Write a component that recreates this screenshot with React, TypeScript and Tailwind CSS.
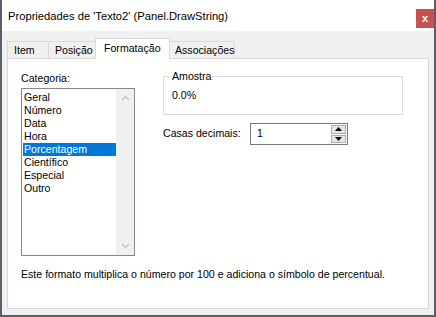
const categorias = ["Geral", "Número", "Data", "Hora", "Porcentagem", "Científico", "Especial", "Outro"];

function Tab({ label, w, first }: { label: string; w: string; first?: boolean }) {
  return (
    <div
      className={`${w} h-[17px] flex items-center pl-[6px] border-t border-r border-[#d9d9d9] bg-[#f0f0f0] leading-none whitespace-nowrap ${first ? "border-l" : ""}`}
    >
      {label}
    </div>
  );
}

export default function App() {
  return (
    <div className="w-[436px] h-[317px] flex flex-col border-x-2 border-b-2 border-[#5b6066] bg-[#f0f0f0] text-[10.6px] text-black font-['Liberation_Sans',sans-serif] overflow-hidden">
      <div className="h-[31px] shrink-0 bg-white flex items-start">
        <div className="pl-[6px] pt-[9px] leading-[14px] text-[11.2px] whitespace-nowrap">Propriedades de 'Texto2' (Panel.DrawString)</div>
        <div className="ml-auto mt-[9px] w-[18px] h-[19px] bg-[#c75050] text-white flex items-center justify-center text-[11px] font-bold leading-none">
          x
        </div>
      </div>

      <div className="flex-1 flex flex-col pl-[5px] pr-[5px] pt-[6px] pb-[6px]">
        <div className="h-[21px] flex items-end relative z-10">
          <Tab label="Item" w="w-[42px]" first />
          <Tab label="Posição" w="w-[48px]" />
          <div className="w-[75px] h-[21px] -mx-[2px] -mb-px relative z-10 bg-white border-x border-t border-[#d9d9d9] flex items-center pl-[8px] pb-[2px] leading-none whitespace-nowrap">
            Formatação
          </div>
          <Tab label="Associações" w="w-[67px]" first />
        </div>

        <div className="flex-1 bg-white border border-[#d9d9d9] flex flex-col">
          <div className="flex pt-[12px]">
            <div className="ml-[13px] flex flex-col">
              <div className="leading-[13px] h-[13px] pt-px">Categoria:</div>
              <div className="mt-[4px] w-[114px] h-[168px] border border-[#828790] flex">
                <div className="flex-1 flex flex-col pt-[2px] pl-[1px]">
                  {categorias.map((c) => (
                    <div
                      key={c}
                      className={`h-[13px] leading-[13px] pl-[1px] ${c === "Porcentagem" ? "bg-[#0078d7] text-white" : ""}`}
                    >
                      {c}
                    </div>
                  ))}
                </div>
                <div className="w-[18px] bg-[#f0f0f0] flex flex-col justify-between items-center py-[6px]">
                  <svg width="9" height="6" viewBox="0 0 9 6">
                    <polyline points="1,5 4.5,1.5 8,5" fill="none" stroke="#c2c2c2" strokeWidth="1.5" />
                  </svg>
                  <svg width="9" height="6" viewBox="0 0 9 6">
                    <polyline points="1,1 4.5,4.5 8,1" fill="none" stroke="#c2c2c2" strokeWidth="1.5" />
                  </svg>
                </div>
              </div>
            </div>

            <div className="ml-[28px] flex flex-col">
              <fieldset className="w-[240px] h-[45px] border border-[#dcdcdc] px-[8px] -mt-px">
                <legend className="px-[1px] -ml-[1px] leading-[13px]">Amostra</legend>
                <div className="pt-[6px] leading-[13px]">0.0%</div>
              </fieldset>
              <div className="mt-[8px] h-[22px] flex items-center">
                <span className="w-[87px] whitespace-nowrap">Casas decimais:</span>
                <div className="w-[98px] h-[22px] border border-[#7a7a7a] flex items-center bg-white">
                  <span className="flex-1 pl-[6px]">1</span>
                  <div className="w-[16px] h-full flex flex-col gap-px p-px pl-0">
                    <div className="flex-1 bg-[#e5e5e5] border border-[#adadad] flex items-center justify-center">
                      <svg width="7" height="4" viewBox="0 0 7 4">
                        <polygon points="0,4 3.5,0 7,4" fill="#000" />
                      </svg>
                    </div>
                    <div className="flex-1 bg-[#e5e5e5] border border-[#adadad] flex items-center justify-center">
                      <svg width="7" height="4" viewBox="0 0 7 4">
                        <polygon points="0,0 3.5,4 7,0" fill="#000" />
                      </svg>
                    </div>
                  </div>
                </div>
              </div>
            </div>
          </div>

          <p className="ml-[13px] mt-[12px] leading-[13px] whitespace-nowrap">
            Este formato multiplica o número por 100 e adiciona o símbolo de percentual.
          </p>
        </div>
      </div>
    </div>
  );
}
